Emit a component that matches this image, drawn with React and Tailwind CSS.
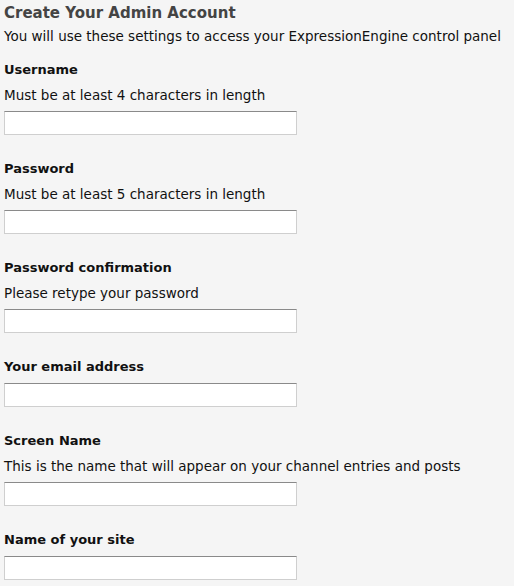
import React from "react";

const fields = [
  { label: "Username", hint: "Must be at least 4 characters in length" },
  { label: "Password", hint: "Must be at least 5 characters in length" },
  { label: "Password confirmation", hint: "Please retype your password" },
  { label: "Your email address" },
  { label: "Screen Name", hint: "This is the name that will appear on your channel entries and posts" },
  { label: "Name of your site" },
];

const App = () => {
  return (
    <div className="min-h-[586px] w-[514px] bg-[#f5f5f5] px-1 pt-[3px] font-['DejaVu_Sans',sans-serif] text-[13.5px] text-[#111]">
      <h1 className="text-[15px] font-bold leading-[20px] text-[#444]">Create Your Admin Account</h1>
      <p className="mt-[3px] leading-[20px]">You will use these settings to access your ExpressionEngine control panel</p>

      <div className="mt-[14px]">
        {fields.map((f) => (
          <div key={f.label} className="mb-6">
            <label className={`block text-[13px] font-bold leading-[20px] ${f.hint ? "mb-[5px]" : "mb-[6px]"}`}>{f.label}</label>
            {f.hint && <p className="mb-[6px] leading-[20px]">{f.hint}</p>}
            <input
              type="text"
              className="block h-6 w-[293px] border border-[#cfcfcf] border-t-[#8a8a8a] bg-white outline-none"
            />
          </div>
        ))}
      </div>
    </div>
  );
};

export default App;
